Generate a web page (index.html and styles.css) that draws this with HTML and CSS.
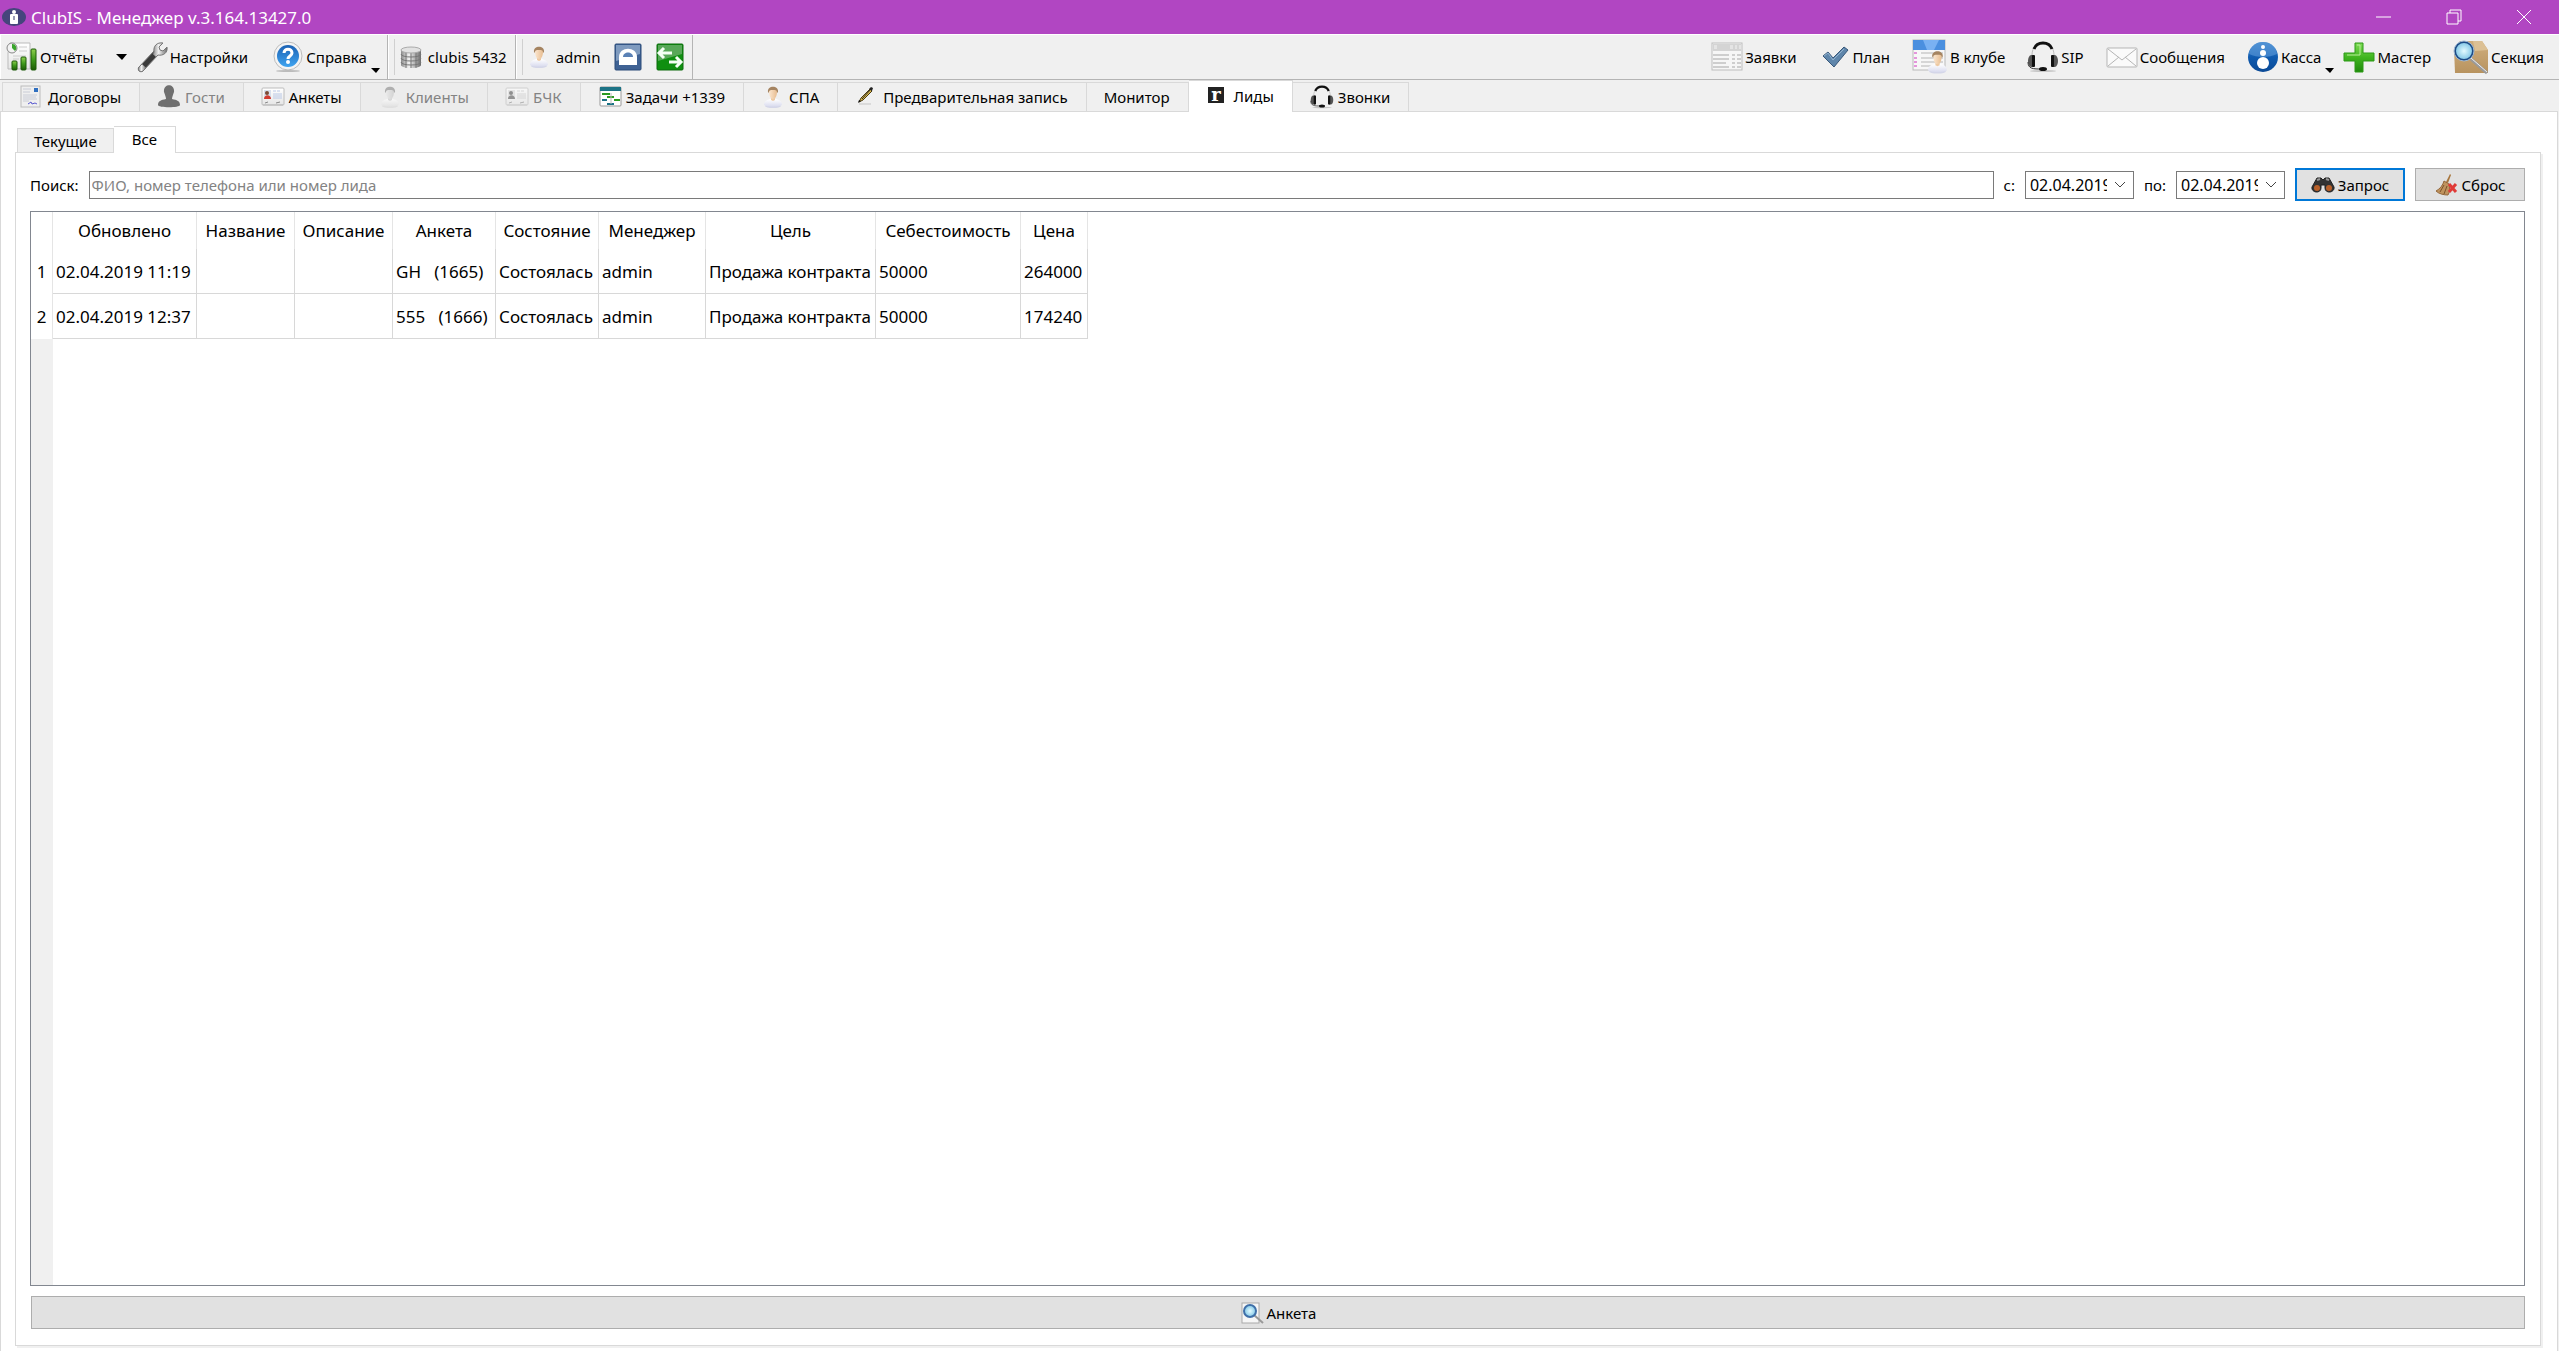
FILE: index.html
```html
<!DOCTYPE html>
<html lang="ru">
<head>
  <meta charset="UTF-8" />
  <meta name="viewport" content="width=device-width, initial-scale=1.0"/>
  <title>ClubIS - Менеджер v.3.164.13427.0</title>
  <link rel="stylesheet" href="styles.css">
</head>
<body>

  <!-- shared icons -->
  <svg class="defs" aria-hidden="true">
    <defs>
      <linearGradient id="gGreen" x1="0" y1="0" x2="0" y2="1"><stop offset="0" stop-color="#8fd04f"/><stop offset=".5" stop-color="#3f9a1c"/><stop offset="1" stop-color="#1d5c06"/></linearGradient>
      <linearGradient id="gPlus" x1="0" y1="0" x2="0" y2="1"><stop offset="0" stop-color="#7fdc55"/><stop offset=".5" stop-color="#3fb51f"/><stop offset="1" stop-color="#1f8a0c"/></linearGradient>
      <linearGradient id="gMetal" x1="0" y1="0" x2="1" y2="0"><stop offset="0" stop-color="#8a8a8a"/><stop offset=".4" stop-color="#f2f2f2"/><stop offset="1" stop-color="#6d6d6d"/></linearGradient>
      <linearGradient id="gBlue" x1="0" y1="0" x2="0" y2="1"><stop offset="0" stop-color="#3f86cc"/><stop offset=".5" stop-color="#0f5bb0"/><stop offset="1" stop-color="#0b4a96"/></linearGradient>
      <linearGradient id="gHelp" x1="0" y1="0" x2="0" y2="1"><stop offset="0" stop-color="#1c62b4"/><stop offset="1" stop-color="#3fa4f0"/></linearGradient>
      <linearGradient id="gPaper" x1="0" y1="0" x2="0" y2="1"><stop offset="0" stop-color="#ffffff"/><stop offset="1" stop-color="#e6e6e6"/></linearGradient>
      <linearGradient id="gSkin" x1="0" y1="0" x2="1" y2="0"><stop offset="0" stop-color="#fbe6cf"/><stop offset="1" stop-color="#e8bd90"/></linearGradient>
      <linearGradient id="gShirt" x1="0" y1="0" x2="0" y2="1"><stop offset="0" stop-color="#ffffff"/><stop offset="1" stop-color="#d9dbee"/></linearGradient>
      <radialGradient id="gLens"><stop offset="0" stop-color="#e4fbff"/><stop offset="1" stop-color="#7fc6e6"/></radialGradient>
      <linearGradient id="gBox" x1="0" y1="0" x2="0" y2="1"><stop offset="0" stop-color="#d0ae7c"/><stop offset="1" stop-color="#b8935f"/></linearGradient>
    </defs>
    <symbol id="user" viewBox="0 0 20 24">
      <ellipse cx="10" cy="21" rx="8" ry="2" fill="#d4d6e8"/>
      <path d="M1 20c0-4 3-5 6-6h6c3 1 6 2 6 6-4 2-14 2-18 0z" fill="url(#gShirt)"/>
      <path d="M8 12h4v3l-2 1-2-1z" fill="#edc9a2"/>
      <path d="M6 6c0-3 8-3 8 0 0 4-1 8-4 8s-4-4-4-8z" fill="url(#gSkin)"/>
      <path d="M5 7c-1-7 11-7 10 0l-1 1c0-3-1-3-4-3S6 5 6 8z" fill="#a58461"/>
    </symbol>
    <symbol id="card" viewBox="0 0 24 20">
      <rect x="1" y="1" width="22" height="17" rx="1" fill="url(#gPaper)" stroke="#bcbcbc"/>
      <rect x="3" y="3" width="7" height="9" fill="#d7dfec"/>
      <circle cx="6" cy="6" r="2" fill="#7b4a35"/>
      <path d="M3 12c0-5 7-5 7 0z" fill="#d13a2f"/>
      <path d="M12 4h3m1 0h3M12 7h9M12 9h9M12 11h9" stroke="#b9c8e6"/>
      <path d="M4 16l3-1m8 1l4-1" stroke="#888"/>
      <path d="M2 18h20" stroke="#bbb"/>
    </symbol>
    <symbol id="headset" viewBox="0 0 32 32">
      <ellipse cx="16" cy="30" rx="13" ry="1" fill="#c6c6c6"/>
      <path d="M5 14C5 -2 27 -2 27 14" fill="none" stroke="#bbb" stroke-width="1"/>
      <path d="M7 8C10 0 22 0 25 8" fill="none" stroke="#111" stroke-width="3"/>
      <path d="M4 14h3v12H4c-4-1-4-11 0-12zM28 14h-3v12h3c4-1 4-11 0-12z" fill="#555"/>
      <rect x="5" y="14" width="3" height="12" rx="1" fill="#111"/>
      <rect x="24" y="14" width="3" height="12" rx="1" fill="#111"/>
      <path d="M1 21c0 7 5 7 14 7" fill="none" stroke="#333" stroke-width="1"/>
      <ellipse cx="16" cy="28" rx="4" ry="2" fill="#111"/>
    </symbol>
  </svg>

  <header class="titlebar">
    <svg class="app-icon" viewBox="0 0 24 18"><ellipse cx="12" cy="9" rx="12" ry="9" fill="#45457c"/><rect x="8" y="6" width="8" height="10" rx="1" fill="#fff"/><circle cx="12" cy="4" r="2" fill="#fff"/><path d="M11 8h2v4h-2z" fill="#9a9ab8"/></svg>
    <h1>ClubIS - Менеджер v.3.164.13427.0</h1>
    <div class="window-buttons">
      <button aria-label="Свернуть"><svg viewBox="0 0 16 16"><path d="M0 8h15"/></svg></button>
      <button aria-label="Восстановить"><svg viewBox="0 0 16 16"><path d="M1 4h11v11H1zM4 4V1h11v11h-3"/></svg></button>
      <button aria-label="Закрыть"><svg viewBox="0 0 16 16"><path d="M1 1l14 14M15 1L1 15"/></svg></button>
    </div>
  </header>

  <div class="toolbar">
    <div class="tool-group">
      <button class="tool">
        <svg class="i32" viewBox="0 0 32 32"><path d="M4 2h20v26H2V12z" fill="url(#gPaper)" stroke="#bbb"/><path d="M13 6h8M13 10h8M7 15h13M7 18h6" stroke="#ccc"/><circle cx="6" cy="7" r="5" fill="#f3f3f3" stroke="#888"/><path d="M6 7V3a4 4 0 0 1 3 7z" fill="#3aa52c"/><g fill="url(#gGreen)" stroke="#1c5a08"><rect x="6" y="20" width="5" height="9" rx="1"/><rect x="15" y="16" width="5" height="13" rx="1"/><rect x="25" y="8" width="5" height="21" rx="1"/></g></svg>
        Отчёты
      </button>
      <button class="drop" aria-label="Список отчётов"><svg viewBox="0 0 12 6"><path d="M0 0h11L6 6z"/></svg></button>
      <button class="tool">
        <svg class="i32" viewBox="0 0 32 32"><path d="M3 26L18 10l4 4L7 30c-3 2-6-1-4-4z" fill="#3b3b3b" stroke="#777"/><path d="M18 11c-1-6 3-10 9-9l-4 4 1 3 3 1 4-4c1 6-4 9-9 8l-2 2-3-3z" fill="url(#gMetal)" stroke="#777"/><path d="M3 26l3-3 4 4-3 3c-3 2-6-1-4-4z" fill="url(#gMetal)" stroke="#777"/></svg>
        Настройки
      </button>
      <button class="tool help">
        <svg class="i32" viewBox="0 0 32 32"><ellipse cx="16" cy="30" rx="12" ry="1" fill="#bbb"/><circle cx="16" cy="15" r="14" fill="#f4f4f4" stroke="#bcbcbc"/><circle cx="16" cy="15" r="11" fill="url(#gHelp)"/><path d="M12 12c0-5 8-5 8 0 0 3-4 3-4 6" fill="none" stroke="#fff" stroke-width="3"/><circle cx="16" cy="21" r="2" fill="#fff"/></svg>
        Справка
        <svg class="menu-arrow" viewBox="0 0 10 5"><path d="M0 0h9L5 5z"/></svg>
      </button>
    </div>
    <div class="tool-group">
      <span class="handle"></span>
      <button class="tool wide">
        <svg class="i24" viewBox="0 0 24 24"><path d="M2 5v15c0 4 20 4 20 0V5z" fill="url(#gMetal)"/><path d="M2 9c0 4 20 4 20 0M2 13c0 4 20 4 20 0M2 17c0 4 20 4 20 0M7 8v15M12 8v15M17 8v15" fill="none" stroke="#777"/><ellipse cx="12" cy="5" rx="10" ry="3" fill="#e2e2e2" stroke="#aaa"/></svg>
        clubis 5432
      </button>
    </div>
    <div class="tool-group">
      <span class="handle"></span>
      <button class="tool wide"><svg class="i24"><use href="#user"/></svg>admin</button>
      <button class="tool square" aria-label="Заблокировать"><svg class="i28" viewBox="0 0 28 28"><rect x="1" y="1" width="26" height="26" rx="1" fill="#3f6294" stroke="#2b4a78"/><path d="M2 2h24v9L2 18z" fill="#7f9bbf"/><path d="M5 22v-8C5 3 23 3 23 14v8z" fill="#fff"/><path d="M9 14c0-6 10-6 10 0z" fill="#5a81b5"/></svg></button>
      <button class="tool square" aria-label="Сменить пользователя"><svg class="i28" viewBox="0 0 28 28"><rect x="1" y="1" width="26" height="26" rx="1" fill="#0f8f10" stroke="#0c6a0d"/><path d="M2 2h24v9L2 18z" fill="#58a858"/><path d="M3 10h13M8 5l-5 5 5 5M13 19h12M20 14l5 5-5 5" fill="none" stroke="#f4fff4" stroke-width="3"/></svg></button>
    </div>
    <div class="tool-right">
      <button class="tool">
        <svg class="i32" viewBox="0 0 32 32"><rect x="1" y="2" width="30" height="27" fill="#f6f6f6" stroke="#bdbdbd"/><path d="M2 3h28v7H2z" fill="#d4d4d4"/><path d="M3 5h3m13 0h3m2 0h2m2 0h2M3 7h3m13 0h3m2 0h2m2 0h2" stroke="#f5f5f5"/><path d="M2 14h16M2 18h16M2 22h13M2 26h16M21 14h3m2 0h4M21 18h3m2 0h4M21 22h3m2 0h4M21 26h3m2 0h4" stroke="#a6a6a6"/></svg>
        Заявки
      </button>
      <button class="tool">
        <svg class="i32" viewBox="0 0 32 32"><path d="M4 15l5-4 5 6L25 6l4 3-14 17z" fill="#5f86ab" stroke="#38587a"/><path d="M5 15l4-3 5 7L25 8" fill="none" stroke="#93b3cf"/></svg>
        План
      </button>
      <button class="tool">
        <svg class="i36" viewBox="0 0 36 36"><rect x="1" y="1" width="32" height="30" fill="#f7f7f7" stroke="#b9b9b9"/><path d="M1 1h32v10H1z" fill="#4a8fdf"/><path d="M11 1h16l-5 10H15z" fill="#79b1f2"/><path d="M9 14h22M9 19h22M9 23h22M9 27h22" stroke="#b5b5b5"/><path d="M2 14h3M2 19h3M2 23h3M2 27h3" stroke="#d234c0"/><svg x="15" y="10" width="21" height="26"><use href="#user"/></svg></svg>
        В клубе
      </button>
      <button class="tool"><svg class="i32"><use href="#headset"/></svg>SIP</button>
      <button class="tool">
        <svg class="i32" viewBox="0 0 32 32"><rect x="1" y="7" width="30" height="19" rx="1" fill="#fafafa" stroke="#b5b5b5"/><path d="M2 25l11-9M30 25l-11-9M2 8l14 11L30 8" fill="none" stroke="#b5b5b5"/></svg>
        Сообщения
      </button>
      <button class="tool kassa">
        <svg class="i32" viewBox="0 0 32 32"><circle cx="16" cy="16" r="15" fill="url(#gBlue)"/><path d="M2 13C3-3 29-3 30 13 22 17 10 17 2 13z" fill="#5d9bda" opacity=".6"/><circle cx="16" cy="6" r="2" fill="#fff"/><circle cx="16" cy="12" r="3" fill="#fff"/><circle cx="16" cy="22" r="6" fill="#fff"/></svg>
        Касса
        <svg class="menu-arrow" viewBox="0 0 10 5"><path d="M0 0h9L5 5z"/></svg>
      </button>
      <button class="tool">
        <svg class="i32" viewBox="0 0 32 32"><path d="M12 2h8v10h11v8H20v11h-8V20H1v-8h11z" fill="url(#gPlus)" stroke="#2d9a16" stroke-linejoin="round"/><path d="M14 4h3v10H4" fill="none" stroke="#b9ee9a"/></svg>
        Мастер
      </button>
      <button class="tool">
        <svg class="i36" viewBox="0 0 36 36"><path d="M1 10l6-8h22l6 9v23H2z" fill="url(#gBox)"/><path d="M20 2h9l6 9-13 1z" fill="#dcc094"/><path d="M18 20l16 14" stroke="#9a9a9a" stroke-width="3"/><path d="M18 19l16 14" stroke="#eee"/><circle cx="11" cy="12" r="9" fill="url(#gLens)" stroke="#1d4b86" stroke-width="2"/><circle cx="11" cy="12" r="10" fill="none" stroke="#9fb9d4"/></svg>
        Секция
      </button>
    </div>
  </div>

  <nav class="tabs" role="tablist">
    <button role="tab"><svg class="i24" viewBox="0 0 24 24"><rect x="1" y="1" width="19" height="21" fill="#efefef" stroke="#bcbcbc"/><rect x="14" y="3" width="4" height="4" fill="#2f6fc0"/><path d="M3 4h8M3 7h7M3 10h14M3 12h13M3 14h14M3 16h6" stroke="#c9ccd6"/><path d="M8 19l3-2 1 2 3-1 2 1" fill="none" stroke="#5a5ad0"/></svg>Договоры</button>
    <button role="tab" disabled><svg class="i24" viewBox="0 0 24 24"><path d="M7 7c-1-9 11-9 10 0-1 3-2 5-2 7 5 1 8 2 8 6 0 3-22 3-22 0 0-4 3-5 8-6 0-2-1-4-2-7z" fill="#6f6f6f"/></svg>Гости</button>
    <button role="tab"><svg class="i24"><use href="#card"/></svg>Анкеты</button>
    <button role="tab" disabled><svg class="i24 grey"><use href="#user"/></svg>Клиенты</button>
    <button role="tab" disabled><svg class="i24 grey"><use href="#card"/></svg>БЧК</button>
    <button role="tab"><svg class="i24" viewBox="0 0 24 24"><rect x="2" y="2" width="21" height="19" rx="1" fill="#fff" stroke="#999"/><path d="M2 2h21v4H2z" fill="#1c7386"/><path d="M4 9h8M9 12h7M16 15h6" stroke="#2b9a22" stroke-width="2"/><path d="M4 15h5M9 19h7" stroke="#1c7386" stroke-width="2"/><path d="M13 8v11" stroke="#bbb"/></svg>Задачи +1339</button>
    <button role="tab"><svg class="i24"><use href="#user"/></svg>СПА</button>
    <button role="tab"><svg class="i24" viewBox="0 0 24 24"><path d="M4 19h12" stroke="#c5c5c5"/><path d="M4 17l2-4 9-9 2 2-9 9z" fill="#d9b84a" stroke="#4a3b12"/><path d="M7 14l9-10" stroke="#222"/><path d="M3 18l1-3 2 1z" fill="#111"/><path d="M14 4l2-2 2 1-1 3z" fill="#222"/></svg>Предварительная запись</button>
    <button role="tab">Монитор</button>
    <button role="tab" class="active" aria-selected="true"><svg class="i24" viewBox="0 0 24 24"><rect x="2" y="3" width="16" height="16" fill="#222"/><text class="logo-letter" x="10" y="17" text-anchor="middle">r</text></svg>Лиды</button>
    <button role="tab"><svg class="i24"><use href="#headset"/></svg>Звонки</button>
  </nav>

  <main class="pane">
    <div class="tabs sub-tabs" role="tablist">
      <button role="tab">Текущие</button>
      <button role="tab" class="active" aria-selected="true">Все</button>
    </div>

    <section class="leads">
      <form class="search-row">
        <label for="search">Поиск:</label>
        <input type="text" id="search" placeholder="ФИО, номер телефона или номер лида" />
        <label for="dateFrom">с:</label>
        <select id="dateFrom"><option>02.04.2019</option></select>
        <label for="dateTo">по:</label>
        <select id="dateTo"><option>02.04.2019</option></select>
        <button type="button" class="push default">
          <svg class="i24" viewBox="0 0 24 24"><path d="M6 5h4l2 2 2-2h4l5 9c1 6-9 7-9 1v-3h-4v3c0 6-10 5-9-1z" fill="#333" stroke="#222"/><path d="M6 7l3-1M15 6l3 1" stroke="#999" stroke-width="2"/><circle cx="6" cy="15" r="3" fill="#b8602a"/><circle cx="18" cy="15" r="3" fill="#b8602a"/></svg>
          Запрос
        </button>
        <button type="button" class="push">
          <svg class="i24" viewBox="0 0 24 24"><path d="M15 1l1 1-3 8-2-1z" fill="#a8763c"/><path d="M9 8l5 3c1 4 1 8-1 11-4 0-9-1-12-4 4-2 7-6 8-10z" fill="#bf935e" stroke="#94683b"/><path d="M9 12l-4 7M12 13l-3 8" stroke="#7b522a"/><path d="M14 11l7 8M21 11l-7 8" stroke="#e03a37" stroke-width="3"/></svg>
          Сброс
        </button>
      </form>

      <div class="table-wrap">
        <table>
          <colgroup>
            <col class="w-num"><col class="w-date"><col class="w-s"><col class="w-s"><col class="w-m"><col class="w-m"><col class="w-manager"><col class="w-goal"><col class="w-cost"><col class="w-price">
          </colgroup>
          <thead>
            <tr><td></td><th>Обновлено</th><th>Название</th><th>Описание</th><th>Анкета</th><th>Состояние</th><th>Менеджер</th><th>Цель</th><th>Себестоимость</th><th>Цена</th></tr>
          </thead>
          <tbody>
            <tr><th>1</th><td>02.04.2019 11:19</td><td></td><td></td><td>GH   (1665)</td><td>Состоялась</td><td>admin</td><td>Продажа контракта</td><td>50000</td><td>264000</td></tr>
            <tr><th>2</th><td>02.04.2019 12:37</td><td></td><td></td><td>555   (1666)</td><td>Состоялась</td><td>admin</td><td>Продажа контракта</td><td>50000</td><td>174240</td></tr>
          </tbody>
        </table>
      </div>

      <button type="button" class="push form-button">
        <svg class="i24" viewBox="0 0 24 24"><rect x="2" y="2" width="17" height="20" fill="#f6f6f6" stroke="#aaa"/><path d="M14 14l9 8" stroke="#999" stroke-width="2"/><circle cx="10" cy="10" r="6" fill="url(#gLens)" stroke="#3f6fa8" stroke-width="2"/></svg>
        Анкета
      </button>
    </section>
  </main>

</body>
</html>
```
FILE: styles.css
```css
* { box-sizing: border-box; margin: 0; padding: 0; }

html, body {
  height: 100%;
}

body {
  display: flex;
  flex-direction: column;
  overflow: hidden;
  background-color: #f0f0f0;
  font-family: 'Noto Sans', 'Open Sans', sans-serif;
  font-size: 15px;
  color: #000;
}

button, input, select {
  font: inherit;
  color: inherit;
}

svg {
  display: block;
  flex: none;
}

.defs { position: absolute; width: 0; height: 0; }

.i24 { width: 24px; height: 24px; }
.i28 { width: 28px; height: 28px; }
.i32 { width: 32px; height: 32px; }
.i36 { width: 36px; height: 36px; }
.grey { filter: grayscale(1); opacity: 0.6; }

.logo-letter {
  font: bold 18px 'DejaVu Serif', serif;
  fill: #fff;
}

/* title bar */
.titlebar {
  display: flex;
  align-items: center;
  height: 34px;
  padding-left: 2px;
  background-color: #b146c2;
  color: #fff;
}

.app-icon {
  width: 24px;
  height: 18px;
  margin-right: 5px;
}

.titlebar h1 {
  font-size: 17px;
  font-weight: 400;
}

.window-buttons {
  display: flex;
  margin-left: auto;
}

.window-buttons button {
  display: flex;
  align-items: center;
  justify-content: center;
  width: 70px;
  height: 34px;
  background: none;
  border: none;
}

.window-buttons svg {
  width: 16px;
  height: 16px;
  fill: none;
  stroke: #fff;
}

/* toolbar */
.toolbar {
  display: flex;
  height: 46px;
  border-top: 1px solid #fff;
  border-bottom: 1px solid #b4b4b4;
}

.tool-group {
  display: flex;
  align-items: center;
  padding: 0 8px 0 5px;
  border-left: 1px solid #fff;
  border-right: 1px solid #b4b4b4;
}

.handle {
  width: 1px;
  height: 36px;
  margin-right: 4px;
  background-color: #d0d0d0;
}

.tool {
  display: flex;
  align-items: center;
  gap: 2px;
  position: relative;
  background: none;
  border: none;
  white-space: nowrap;
}

.tool.wide { gap: 5px; }
.tool.square { margin-left: 14px; }
.help { margin-left: 24px; padding-right: 12px; }

.drop {
  width: 42px;
  padding-left: 22px;
  background: none;
  border: none;
}

.drop svg { width: 12px; height: 6px; }

.menu-arrow {
  position: absolute;
  right: -2px;
  bottom: 0;
  width: 10px;
  height: 5px;
}

.tool-right {
  display: flex;
  align-items: center;
  gap: 22px;
  margin-left: auto;
  padding-right: 15px;
}

.kassa .menu-arrow { right: -14px; }

/* tabs */
.tabs {
  display: flex;
  align-items: flex-end;
  height: 31px;
  padding-left: 2px;
}

.tabs button {
  display: flex;
  align-items: center;
  gap: 4px;
  height: 29px;
  padding: 0 18px 0 17px;
  background-color: #f0f0f0;
  border: 1px solid #d9d9d9;
  border-width: 1px 1px 0 0;
  white-space: nowrap;
}

.tabs button:first-child { border-left-width: 1px; }
.tabs button:disabled { color: #838383; background-color: #ececec; }

.tabs .active {
  height: 32px;
  margin-bottom: -1px;
  padding-bottom: 2px;
  background-color: #fff;
  position: relative;
}

/* pages */
.pane {
  flex: 1;
  display: flex;
  flex-direction: column;
  min-height: 0;
  margin-right: 1px;
  padding: 14px 16px 5px 14px;
  background-color: #fff;
  border: 1px solid #d9d9d9;
  border-bottom: none;
}

.sub-tabs { height: 26px; }
.sub-tabs button { height: 24px; padding: 0 16px; }
.sub-tabs .active { height: 27px; padding: 0 18px 2px; }

.leads {
  flex: 1;
  display: flex;
  flex-direction: column;
  min-height: 0;
  padding: 15px 15px 16px 14px;
  border: 1px solid #d9d9d9;
  box-shadow: 2px 2px 0 #f0f0f0;
}

.search-row {
  display: flex;
  align-items: center;
  gap: 10px;
  margin-bottom: 10px;
}

.search-row input {
  flex: 1;
  height: 28px;
  padding: 0 2px;
  border: 1px solid #7a7a7a;
}

.search-row input::placeholder { color: #838383; }

.search-row select {
  width: 109px;
  height: 28px;
  padding: 0 26px 0 4px;
  border: 1px solid #7a7a7a;
  appearance: none;
  background: #fff url("data:image/svg+xml,%3Csvg xmlns='http://www.w3.org/2000/svg' width='12' height='8'%3E%3Cpath d='M1 1l5 5 5-5' fill='none' stroke='%23444'/%3E%3C/svg%3E") no-repeat right 7px center;
  font-size: 16px;
  text-overflow: clip;
}

.push {
  display: flex;
  align-items: center;
  justify-content: center;
  gap: 3px;
  width: 110px;
  height: 33px;
  background-color: #e1e1e1;
  border: 1px solid #adadad;
}

.push.default { border: 2px solid #0078d7; }

.form-button {
  width: auto;
  margin: 10px 0 0 1px;
}

/* leads table */
.table-wrap {
  flex: 1;
  min-height: 0;
  border: 1px solid #828790;
  background: linear-gradient(#f0f0f0, #f0f0f0) no-repeat 0 0 / 22px 100%;
}

table {
  width: 1057px;
  table-layout: fixed;
  border-collapse: separate;
  border-spacing: 0;
  background-color: #fff;
  font-size: 17px;
}

th, td {
  height: 45px;
  padding: 0 3px;
  border-right: 1px solid #d8d8d8;
  border-bottom: 1px solid #d8d8d8;
  font-weight: 400;
  text-align: left;
  white-space: pre;
}

thead th, thead td {
  height: 37px;
  border-right-color: #e5e5e5;
  border-bottom: none;
  text-align: center;
}

tbody th {
  border-right-color: #e5e5e5;
  border-bottom: none;
  text-align: center;
}

.w-num { width: 22px; }
.w-date { width: 144px; }
.w-s { width: 98px; }
.w-m { width: 103px; }
.w-manager { width: 107px; }
.w-goal { width: 170px; }
.w-cost { width: 145px; }
.w-price { width: 67px; }
```
